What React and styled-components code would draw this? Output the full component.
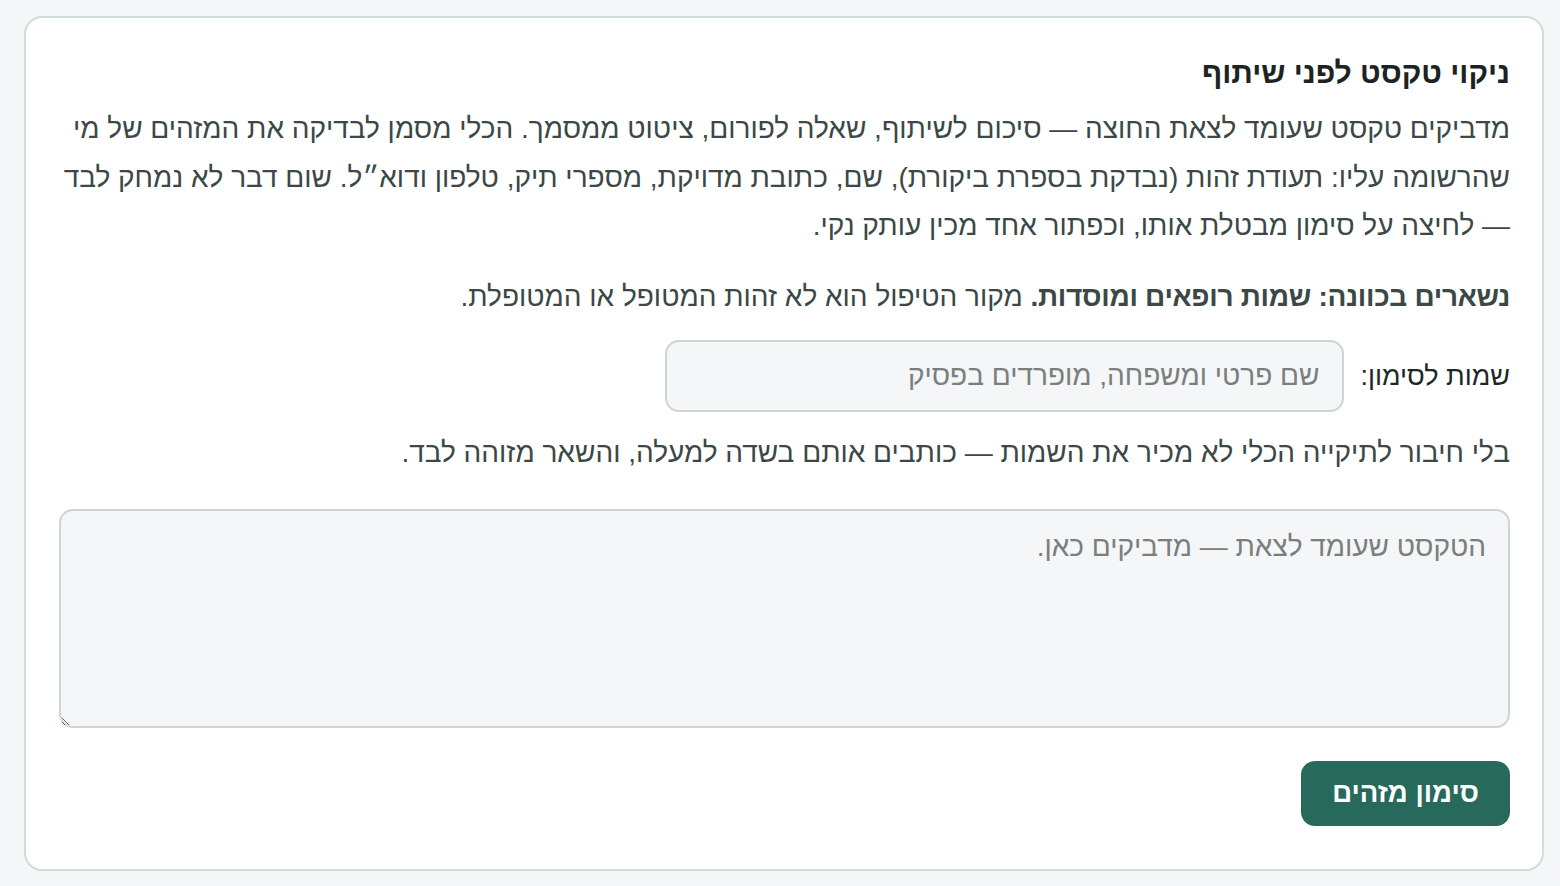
import React from 'react';
import styled, { createGlobalStyle } from 'styled-components';

const GlobalStyle = createGlobalStyle`
  html, body {
    margin: 0;
    padding: 0;
    background-color: #f4f6f8;
  }
  body {
    font-family: "Liberation Sans", "DejaVu Sans", sans-serif;
  }
`;

const Page = styled.div`
  padding: 16px 16px 16px 24px;
  direction: rtl;
`;

const Card = styled.section`
  background-color: #fff;
  border: 2px solid #d2dcda;
  border-radius: 18px;
  padding: 32px 32px 43px 33px;
  display: flex;
  flex-direction: column;
`;

const Title = styled.h2`
  margin: 0 0 9px;
  font-size: 30px;
  line-height: 46px;
  font-weight: 700;
  color: #1b2422;
`;

const Text = styled.p`
  margin: 0 0 ${(p) => p.$gap || 20}px;
  font-size: 28px;
  line-height: 48.5px;
  color: #3b4846;

  strong {
    font-weight: 700;
    letter-spacing: -0.3px;
  }
`;

const FieldRow = styled.label`
  display: flex;
  align-items: center;
  gap: 17px;
  margin-bottom: 17px;
`;

const FieldLabel = styled.span`
  font-size: 27px;
  color: #1d2826;
`;

const NameInput = styled.input`
  width: 679px;
  height: 72px;
  box-sizing: border-box;
  padding: 0 22px;
  font-family: inherit;
  font-size: 28px;
  color: #1d2826;
  background-color: #f4f6f7;
  border: 2px solid #cdd6d4;
  border-radius: 14px;
  outline: none;

  &::placeholder {
    color: #7a7f7e;
  }
`;

const TextArea = styled.textarea`
  display: block;
  width: 100%;
  height: 219px;
  box-sizing: border-box;
  margin: 11px 0 33px;
  padding: 12px 22px;
  font-family: inherit;
  font-size: 28px;
  line-height: 48px;
  color: #1d2826;
  background-color: #f4f6f7;
  border: 2px solid #cdd6d4;
  border-radius: 14px;
  outline: none;

  &::placeholder {
    color: #7a7f7e;
  }
`;

const Actions = styled.div`
  display: flex;
  justify-content: flex-start;
`;

const PrimaryButton = styled.button`
  height: 65px;
  padding: 0 31px;
  font-family: inherit;
  font-size: 27.5px;
  font-weight: 700;
  color: #fff;
  background-color: #276a5c;
  border: none;
  border-radius: 14px;
  cursor: pointer;
`;

const App = () => (
  <Page>
    <GlobalStyle />
    <Card>
      <Title>ניקוי טקסט לפני שיתוף</Title>
      <Text $gap={22}>
        מדביקים טקסט שעומד לצאת החוצה — סיכום לשיתוף, שאלה לפורום, ציטוט ממסמך. הכלי מסמן לבדיקה את המזהים של מי
        שהרשומה עליו: תעודת זהות (נבדקת בספרת ביקורת), שם, כתובת מדויקת, מספרי תיק, טלפון ודוא״ל. שום דבר לא נמחק לבד
        — לחיצה על סימון מבטלת אותו, וכפתור אחד מכין עותק נקי.
      </Text>
      <Text $gap={19}>
        <strong>נשארים בכוונה: שמות רופאים ומוסדות.</strong> מקור הטיפול הוא לא זהות המטופל או המטופלת.
      </Text>
      <FieldRow>
        <FieldLabel>שמות לסימון:</FieldLabel>
        <NameInput type="text" placeholder="שם פרטי ומשפחה, מופרדים בפסיק" />
      </FieldRow>
      <Text $gap={0}>
        בלי חיבור לתיקייה הכלי לא מכיר את השמות — כותבים אותם בשדה למעלה, והשאר מזוהה לבד.
      </Text>
      <TextArea placeholder="הטקסט שעומד לצאת — מדביקים כאן." />
      <Actions>
        <PrimaryButton type="button">סימון מזהים</PrimaryButton>
      </Actions>
    </Card>
  </Page>
);

export default App;
